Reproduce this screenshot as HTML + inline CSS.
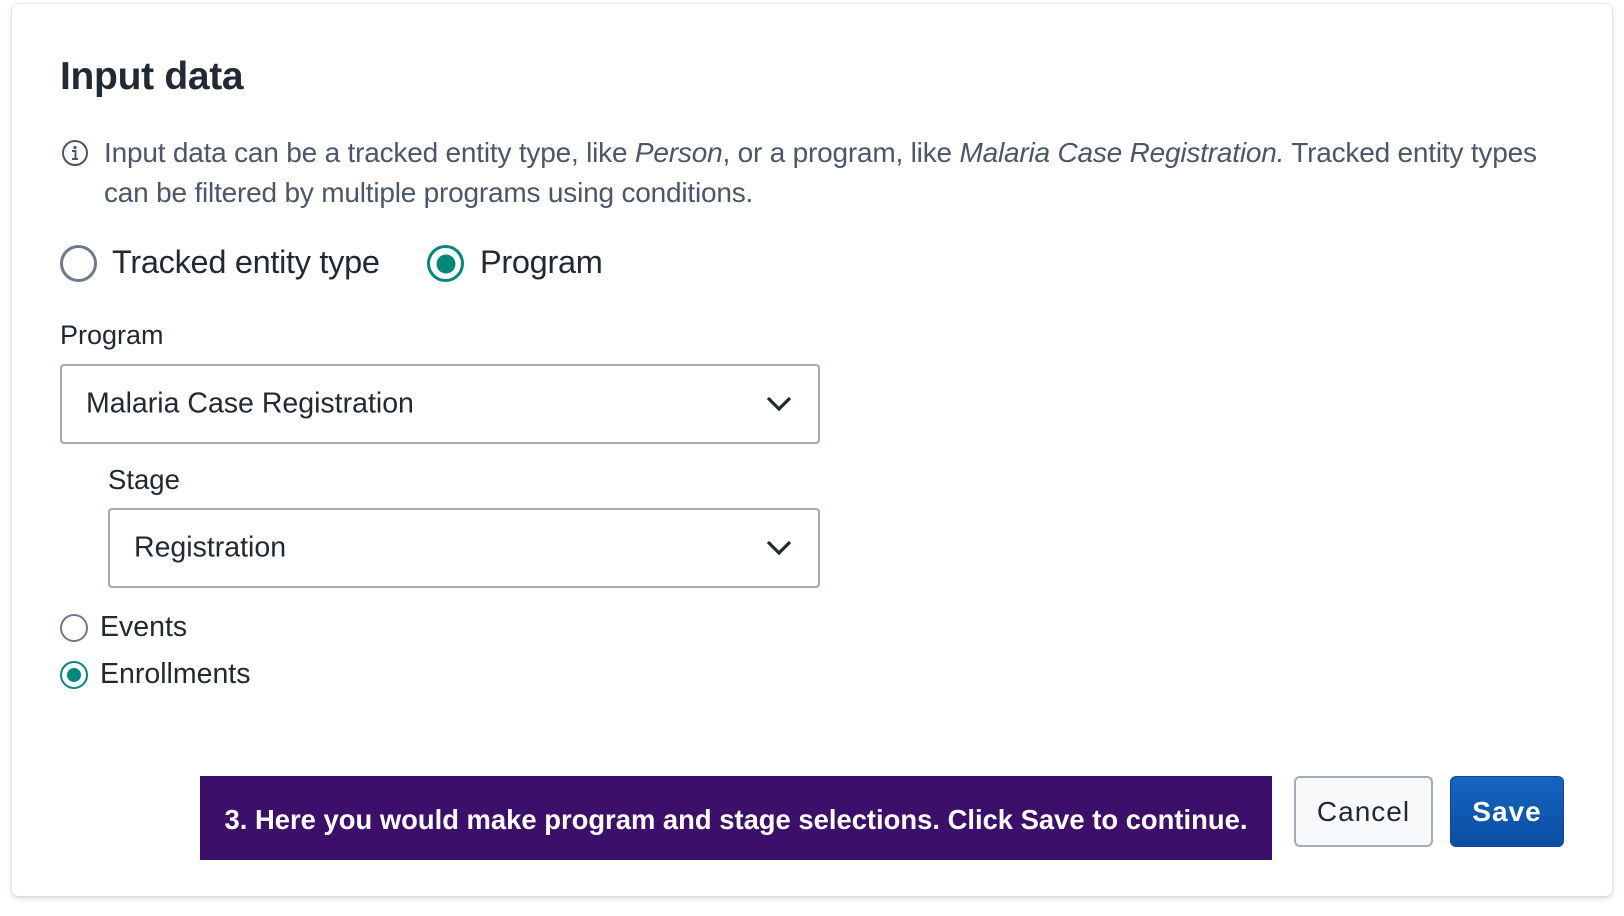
<!DOCTYPE html>
<html><head><meta charset="utf-8"><style>
*{box-sizing:border-box;margin:0;padding:0}
body{width:1624px;height:916px;background:#fff;font-family:"Liberation Sans",sans-serif;position:relative;overflow:hidden;color:#212934}
.card{position:absolute;left:12px;top:4px;width:1600px;height:892px;background:#fff;border-radius:6px;box-shadow:0 2px 6px rgba(0,0,0,.18),0 0 1px rgba(0,0,0,.2)}
.a{position:absolute;white-space:nowrap}
.radio{position:absolute;border-radius:50%;border:3px solid #6e7a8a;background:#fff}
.radio.on{border-color:#00897b}
.radio.on::after{content:"";position:absolute;left:50%;top:50%;transform:translate(-50%,-50%);border-radius:50%;background:#00897b}
.r37::after{width:19px;height:19px}
.r28::after{width:14px;height:14px}
.sel{position:absolute;border:2px solid #a0adba;border-radius:4px;background:#fff}
.sel span{position:absolute;left:24px;top:50%;transform:translateY(-50%);font-size:28.5px;color:#212934}
.sel svg{position:absolute;right:26px;top:50%;transform:translateY(-50%)}
</style></head><body>
<div class="card"></div>
<div class="a" style="left:60px;top:55px;font-size:39px;font-weight:bold;color:#212934;letter-spacing:-0.3px">Input data</div>
<svg class="a" style="left:61px;top:139px" width="28" height="28" viewBox="0 0 28 28"><circle cx="14" cy="14" r="12" fill="none" stroke="#4a5768" stroke-width="2"/><circle cx="14" cy="8.5" r="1.6" fill="#4a5768"/><path d="M11 12h3.5v8M11 20h6" fill="none" stroke="#4a5768" stroke-width="2"/></svg>
<div class="a" style="left:104px;top:133px;font-size:28px;line-height:40px;color:#4a5768;white-space:normal;width:1510px;letter-spacing:-0.2px">Input data can be a tracked entity type, like <i>Person</i>, or a program, like <i>Malaria Case Registration.</i> Tracked entity types<br>can be filtered by multiple programs using conditions.</div>
<div class="radio" style="left:60px;top:245px;width:37px;height:37px"></div>
<div class="a" style="left:112px;top:244px;font-size:32.5px;letter-spacing:-0.3px">Tracked entity type</div>
<div class="radio on r37" style="left:427px;top:245px;width:37px;height:37px;border-width:3.5px"></div>
<div class="a" style="left:480px;top:244px;font-size:32.5px;letter-spacing:-0.3px">Program</div>
<div class="a" style="left:60px;top:320px;font-size:27px">Program</div>
<div class="sel" style="left:60px;top:364px;width:760px;height:80px"><span>Malaria Case Registration</span><svg width="26" height="16" viewBox="0 0 26 16"><path d="M2 2l11 11 11-11" fill="none" stroke="#212934" stroke-width="3.2"/></svg></div>
<div class="a" style="left:108px;top:464px;font-size:27.5px">Stage</div>
<div class="sel" style="left:108px;top:508px;width:712px;height:80px"><span>Registration</span><svg width="26" height="16" viewBox="0 0 26 16"><path d="M2 2l11 11 11-11" fill="none" stroke="#212934" stroke-width="3.2"/></svg></div>
<div class="radio" style="left:60px;top:614px;width:28px;height:28px;border-width:2px"></div>
<div class="a" style="left:100px;top:611px;font-size:28.5px">Events</div>
<div class="radio on r28" style="left:60px;top:661px;width:28px;height:28px;border-width:2.5px"></div>
<div class="a" style="left:100px;top:658px;font-size:28.5px">Enrollments</div>
<div class="a" style="left:200px;top:776px;width:1072px;height:84px;background:#3b0f6a;color:#fff;font-weight:bold;font-size:27.4px;display:flex;align-items:center;justify-content:center;padding-top:4px">3. Here you would make program and stage selections. Click Save to continue.</div>
<div class="a" style="left:1294px;top:776px;width:139px;height:71px;border:2px solid #a0adba;border-radius:6px;background:#f8f9fb;font-size:28px;display:flex;align-items:center;justify-content:center;color:#212934;letter-spacing:1px">Cancel</div>
<div class="a" style="left:1450px;top:776px;width:114px;height:71px;border:1px solid #0d47a1;border-radius:6px;background:linear-gradient(#1565c0,#0a4ea3);font-size:28px;font-weight:bold;display:flex;align-items:center;justify-content:center;color:#fff;letter-spacing:1px">Save</div>
</body></html>
